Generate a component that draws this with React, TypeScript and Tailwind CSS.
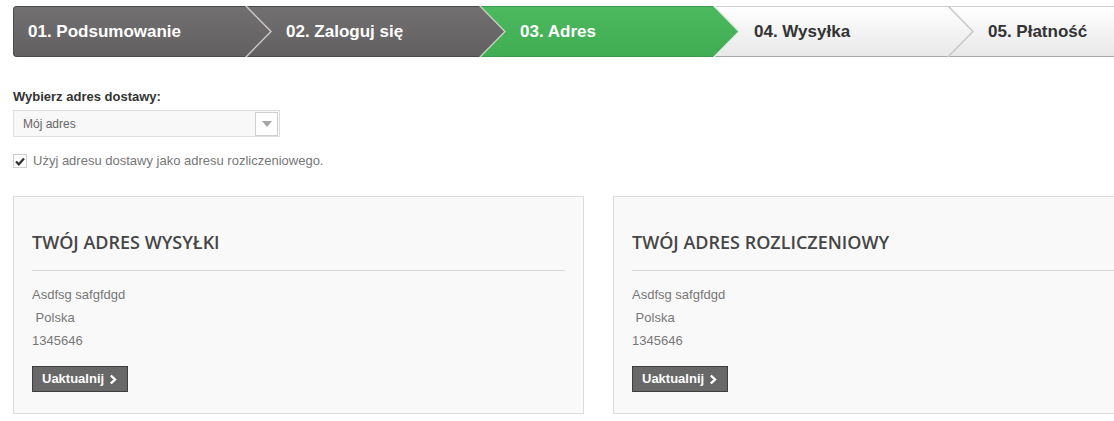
import { Fragment } from "react";

type Step = { label: string; state: "done" | "active" | "todo" };

const STEPS: Step[] = [
  { label: "01. Podsumowanie", state: "done" },
  { label: "02. Zaloguj się", state: "done" },
  { label: "03. Adres", state: "active" },
  { label: "04. Wysyłka", state: "todo" },
  { label: "05. Płatność", state: "todo" },
];

const ADDRESS = ["Asdfsg safgfdgd", "\u00a0Polska", "1345646"];

// outer layer paints the chevron line, inner layer is inset 2px on the arrow side
const OUTER = "[clip-path:polygon(0_0,calc(100%-25px)_0,100%_50%,calc(100%-25px)_100%,0_100%)]";
const INNER = "[clip-path:polygon(0_0,calc(100%-27px)_0,calc(100%-2px)_50%,calc(100%-27px)_100%,0_100%)]";

function StepItem({ step, index }: { step: Step; index: number }) {
  const z = ["z-50", "z-40", "z-30", "z-20", "z-10"][index];
  const line =
    step.state === "todo" ? "bg-[#c6c6c6]" : step.state === "active" ? "bg-[#d9eedc]" : "bg-[#c9c9c9]";
  const body =
    step.state === "done"
      ? "bg-gradient-to-b from-[#716f70] to-[#626061] border-y border-[#4c4a4b] text-white"
      : step.state === "active"
        ? "bg-gradient-to-b from-[#4cb95e] to-[#40ad53] border-y border-[#3a9a4b] text-white"
        : "bg-gradient-to-b from-[#ffffff] to-[#e8e8e8] border-t border-[#d0d0d0] border-b border-b-[#a9a9a9] text-[#333]";

  return (
    <div
      className={`relative ${z} h-[51px] w-[259px] shrink-0 ${OUTER} ${line} ${
        index === 0 ? "rounded-l-[4px]" : "-ml-[25px]"
      }`}
    >
      <div
        className={`flex h-full items-center ${INNER} ${body} ${
          index === 0 ? "rounded-l-[4px] border-l border-l-[#4c4a4b] pl-[14px]" : "pl-[39px]"
        }`}
      >
        <span className="text-[17px] font-bold leading-none">{step.label}</span>
      </div>
    </div>
  );
}

function AddressCard({ title }: { title: string }) {
  return (
    <div className="w-[571px] shrink-0 border border-[#dcdcdc] bg-[#f9f9f9] px-[18px] pt-[35px] pb-[21px]">
      <h2 className="font-['Open_Sans',sans-serif] text-[18px] font-semibold leading-[20px] text-[#464646]">
        {title}
      </h2>
      <div className="mt-[18px] border-t border-[#d8d8d8]" />
      <div className="mt-[12px] flex flex-col text-[13px] leading-[23px] text-[#777]">
        {ADDRESS.map((l, i) => (
          <Fragment key={i}>
            <span className="whitespace-pre">{l}</span>
          </Fragment>
        ))}
      </div>
      <button className="mt-[14px] flex h-[26px] items-center gap-[5px] border border-[#3e3e3e] bg-[#686868] pl-[9px] pr-[10px] text-[13px] font-bold text-white">
        Uaktualnij
        <svg width="8" height="11" viewBox="0 0 8 11" fill="none">
          <path d="M1.8 1.5 L6 5.5 L1.8 9.5" stroke="white" strokeWidth="2.4" />
        </svg>
      </button>
    </div>
  );
}

export default function App() {
  return (
    <div className="h-[421px] w-screen overflow-hidden bg-white font-['Liberation_Sans',Arial,sans-serif]">
      <div className="flex pl-[13px] pt-[6px]">
        {STEPS.map((s, i) => (
          <StepItem key={s.label} step={s} index={i} />
        ))}
      </div>

      <div className="px-[13px]">
        <div className="mt-[32px] text-[13px] font-bold leading-[16px] text-[#333]">Wybierz adres dostawy:</div>

        <div className="mt-[5px] flex h-[27px] w-[267px] items-center justify-between border border-[#dedede] bg-[#f8f8f8] pl-[9px] pr-[1px]">
          <span className="text-[12px] text-[#666]">Mój adres</span>
          <span className="flex h-[24px] w-[23px] items-center justify-center border border-[#cfcfcf] bg-white">
            <svg width="10" height="6" viewBox="0 0 10 6">
              <path d="M0 0 H10 L5 6 Z" fill="#a5a5a5" />
            </svg>
          </span>
        </div>

        <label className="mt-[16px] flex items-center gap-[6px]">
          <span className="flex h-[14px] w-[14px] items-center justify-center border border-[#cfcfcf] bg-white">
            <svg width="10" height="9" viewBox="0 0 10 9" fill="none">
              <path d="M1 4.5 L3.8 7.3 L9 1.5" stroke="#333" strokeWidth="2.2" />
            </svg>
          </span>
          <span className="text-[13px] leading-[16px] text-[#777]">Użyj adresu dostawy jako adresu rozliczeniowego.</span>
        </label>

        <div className="mt-[27px] flex gap-[29px]">
          <AddressCard title="TWÓJ ADRES WYSYŁKI" />
          <AddressCard title="TWÓJ ADRES ROZLICZENIOWY" />
        </div>
      </div>
    </div>
  );
}
